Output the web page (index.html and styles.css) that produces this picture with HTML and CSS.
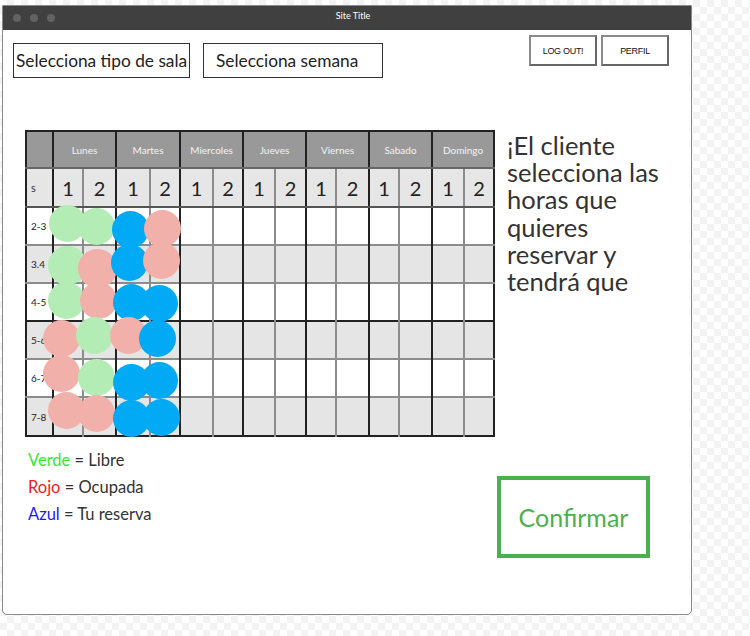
FILE: index.html
```html
<!DOCTYPE html>
<html lang="es">
<head>
<meta charset="utf-8">
<title>Site Title</title>
<link rel="stylesheet" href="styles.css">
</head>
<body>
<div class="window">
  <div class="titlebar">
    <div class="dots"><span class="dot"></span><span class="dot"></span><span class="dot"></span></div>
    <div class="title">Site Title</div>
  </div>
  <div class="content">
    <div class="topbar">
      <div class="selects">
        <div class="select sel-sala">Selecciona tipo de sala</div>
        <div class="select sel-semana">Selecciona semana</div>
      </div>
      <div class="buttons">
        <div class="btn">LOG OUT!</div>
        <div class="btn">PERFIL</div>
      </div>
    </div>

    <div class="main">
      <div class="table-wrap">
        <table class="sched">
          <colgroup>
            <col style="width:27px">
            <col style="width:30px"><col style="width:33px">
            <col style="width:34px"><col style="width:30px">
            <col style="width:33px"><col style="width:30px">
            <col style="width:32px"><col style="width:31px">
            <col style="width:30px"><col style="width:33px">
            <col style="width:30px"><col style="width:33px">
            <col style="width:32px"><col style="width:30px">
          </colgroup>
          <tr class="hdr">
            <th></th>
            <th colspan="2" class="day">Lunes</th>
            <th colspan="2" class="day">Martes</th>
            <th colspan="2" class="day">Miercoles</th>
            <th colspan="2" class="day">Jueves</th>
            <th colspan="2" class="day">Viernes</th>
            <th colspan="2" class="day">Sabado</th>
            <th colspan="2" class="day">Domingo</th>
          </tr>
          <tr class="sub">
            <td class="lbl s">s</td>
            <td class="a">1</td><td class="b">2</td>
            <td class="a">1</td><td class="b">2</td>
            <td class="a">1</td><td class="b">2</td>
            <td class="a">1</td><td class="b">2</td>
            <td class="a">1</td><td class="b">2</td>
            <td class="a">1</td><td class="b">2</td>
            <td class="a">1</td><td class="b">2</td>
          </tr>
          <tr class="row w"><td class="lbl">2-3</td><td class="a"></td><td class="b"></td><td class="a"></td><td class="b"></td><td class="a"></td><td class="b"></td><td class="a"></td><td class="b"></td><td class="a"></td><td class="b"></td><td class="a"></td><td class="b"></td><td class="a"></td><td class="b"></td></tr>
          <tr class="row g"><td class="lbl">3.4</td><td class="a"></td><td class="b"></td><td class="a"></td><td class="b"></td><td class="a"></td><td class="b"></td><td class="a"></td><td class="b"></td><td class="a"></td><td class="b"></td><td class="a"></td><td class="b"></td><td class="a"></td><td class="b"></td></tr>
          <tr class="row w"><td class="lbl">4-5</td><td class="a"></td><td class="b"></td><td class="a"></td><td class="b"></td><td class="a"></td><td class="b"></td><td class="a"></td><td class="b"></td><td class="a"></td><td class="b"></td><td class="a"></td><td class="b"></td><td class="a"></td><td class="b"></td></tr>
          <tr class="row g dark-top"><td class="lbl">5-6</td><td class="a"></td><td class="b"></td><td class="a"></td><td class="b"></td><td class="a"></td><td class="b"></td><td class="a"></td><td class="b"></td><td class="a"></td><td class="b"></td><td class="a"></td><td class="b"></td><td class="a"></td><td class="b"></td></tr>
          <tr class="row w"><td class="lbl">6-7</td><td class="a"></td><td class="b"></td><td class="a"></td><td class="b"></td><td class="a"></td><td class="b"></td><td class="a"></td><td class="b"></td><td class="a"></td><td class="b"></td><td class="a"></td><td class="b"></td><td class="a"></td><td class="b"></td></tr>
          <tr class="row g last"><td class="lbl">7-8</td><td class="a"></td><td class="b"></td><td class="a"></td><td class="b"></td><td class="a"></td><td class="b"></td><td class="a"></td><td class="b"></td><td class="a"></td><td class="b"></td><td class="a"></td><td class="b"></td><td class="a"></td><td class="b"></td></tr>
        </table>
        <div class="blobs">
          <span class="blob green" style="left:24px;top:75px"></span>
          <span class="blob green" style="left:53px;top:78px"></span>
          <span class="blob blue" style="left:87px;top:81px"></span>
          <span class="blob pink" style="left:119px;top:80px"></span>

          <span class="blob green big" style="left:23px;top:116px"></span>
          <span class="blob pink big" style="left:53px;top:119px"></span>
          <span class="blob blue" style="left:86px;top:114px"></span>
          <span class="blob pink" style="left:118px;top:112px"></span>

          <span class="blob green" style="left:23px;top:152px"></span>
          <span class="blob pink" style="left:55px;top:152px"></span>
          <span class="blob blue" style="left:88px;top:154px"></span>
          <span class="blob blue" style="left:116px;top:155px"></span>

          <span class="blob pink" style="left:18px;top:190px"></span>
          <span class="blob green" style="left:51px;top:187px"></span>
          <span class="blob pink" style="left:85px;top:187px"></span>
          <span class="blob blue" style="left:114px;top:190px"></span>

          <span class="blob pink" style="left:18px;top:225px"></span>
          <span class="blob green" style="left:53px;top:229px"></span>
          <span class="blob blue" style="left:88px;top:234px"></span>
          <span class="blob blue" style="left:116px;top:232px"></span>

          <span class="blob pink" style="left:23px;top:262px"></span>
          <span class="blob pink" style="left:53px;top:265px"></span>
          <span class="blob blue" style="left:88px;top:270px"></span>
          <span class="blob blue" style="left:118px;top:269px"></span>
        </div>
      </div>
      <p class="note">¡El cliente selecciona las horas que quieres reservar y tendrá que</p>
    </div>

    <div class="bottom">
      <div class="legend">
        <div><span class="c-green">Verde</span> = Libre</div>
        <div><span class="c-red">Rojo</span> = Ocupada</div>
        <div><span class="c-blue">Azul</span> = Tu reserva</div>
      </div>
      <div class="confirm">Confirmar</div>
    </div>
  </div>
</div>
</body>
</html>
```

FILE: styles.css
```css
html, body {
  margin: 0;
  padding: 0;
}
body {
  width: 750px;
  height: 636px;
  overflow: hidden;
  background: repeating-conic-gradient(#f3f3f3 0 25%, #ffffff 0 50%) 0 0 / 14px 14px;
  font-family: "Lato", "Liberation Sans", sans-serif;
  color: #333;
}
.window {
  box-sizing: border-box;
  margin: 5px 0 0 2px;
  width: 690px;
  height: 610px;
  background: #fff;
  border: 1px solid #8a8a8a;
  border-radius: 0 0 5px 5px;
  display: flex;
  flex-direction: column;
}
.titlebar {
  height: 24px;
  background: #404040;
  position: relative;
  display: flex;
  align-items: center;
}
.dots {
  display: flex;
  gap: 9px;
  padding-left: 10px;
}
.dot {
  width: 8px;
  height: 8px;
  border-radius: 50%;
  background: #626262;
}
.title {
  position: absolute;
  left: 0;
  right: 0;
  top: 4px;
  text-align: center;
  font-size: 9px;
  color: #fff;
  padding-left: 12px;
}
.content {
  flex: 1;
  padding: 0 22px 0 10px;
}
.topbar {
  display: flex;
  justify-content: space-between;
  align-items: flex-start;
}
.selects {
  display: flex;
  gap: 13px;
  margin-top: 13px;
}
.select {
  box-sizing: border-box;
  height: 35px;
  border: 1px solid #333;
  font-size: 17.3px;
  color: #222;
  display: flex;
  align-items: center;
  white-space: nowrap;
}
.sel-sala {
  width: 177px;
  padding-left: 2px;
}
.sel-semana {
  width: 180px;
  padding-left: 12px;
}
.buttons {
  display: flex;
  gap: 4px;
  margin-top: 5px;
}
.btn {
  box-sizing: border-box;
  width: 68px;
  height: 31px;
  border: 2px solid #666;
  border-top-color: #8a8a8a;
  border-left-color: #8a8a8a;
  display: flex;
  align-items: center;
  justify-content: center;
  font-family: "Liberation Sans", sans-serif;
  font-size: 9px;
  color: #111;
  letter-spacing: -0.3px;
}
.main {
  display: flex;
  align-items: flex-start;
  margin-top: 52px;
  padding-left: 12px;
}
.table-wrap {
  position: relative;
  width: 469px;
  height: 308px;
}
.sched {
  border-collapse: collapse;
  table-layout: fixed;
  width: 469px;
  border: 2px solid #222;
}
.sched th, .sched td {
  padding: 0;
  text-align: center;
}
.hdr th {
  height: 35px;
  background: #999;
  color: #f4f4f4;
  font-weight: normal;
  font-size: 10px;
  border-bottom: 2px solid #666;
}
.hdr .day {
  border-left: 2px solid #222;
}
.sub td {
  height: 37px;
  background: #e6e6e6;
  font-size: 20px;
  color: #222;
  border-bottom: 2px solid #555;
}
.sub td.s {
  font-size: 11px;
  color: #333;
}
.sched .a {
  border-left: 2px solid #222;
}
.sched .b {
  border-left: 2px solid #8c8c8c;
}
.row td {
  height: 36px;
  border-top: 2px solid #8c8c8c;
}
.row.last td {
  height: 37px;
}
.row.dark-top td {
  border-top: 2px solid #222;
}
.row.w td { background: #fff; }
.row.g td { background: #e5e5e5; }
.lbl {
  font-size: 10px;
  color: #222;
  text-align: left !important;
  padding-left: 4px !important;
}
.blobs {
  position: absolute;
  left: 0;
  top: 0;
}
.blob {
  position: absolute;
  width: 37px;
  height: 37px;
  border-radius: 50%;
}
.blob.big {
  width: 39px;
  height: 39px;
}
.green { background: #b3edb5; }
.pink { background: #f2b0ab; }
.blue { background: #02a9f4; }
.note {
  margin: 2px 0 0 13px;
  width: 158px;
  font-size: 25.5px;
  line-height: 27.2px;
  color: #333;
}
.bottom {
  display: flex;
  justify-content: space-between;
  align-items: flex-start;
  padding-left: 15px;
  margin-top: 9px;
}
.legend {
  font-size: 16.5px;
  line-height: 27px;
  color: #333;
}
.c-green { color: #35e838; }
.c-red { color: #f21d1d; }
.c-blue { color: #1a1aff; }
.confirm {
  box-sizing: border-box;
  width: 153px;
  height: 82px;
  margin-top: 29px;
  margin-right: 19px;
  border: 4px solid #4caf50;
  display: flex;
  align-items: center;
  justify-content: center;
  color: #4caf50;
  font-size: 25px;
}
```
